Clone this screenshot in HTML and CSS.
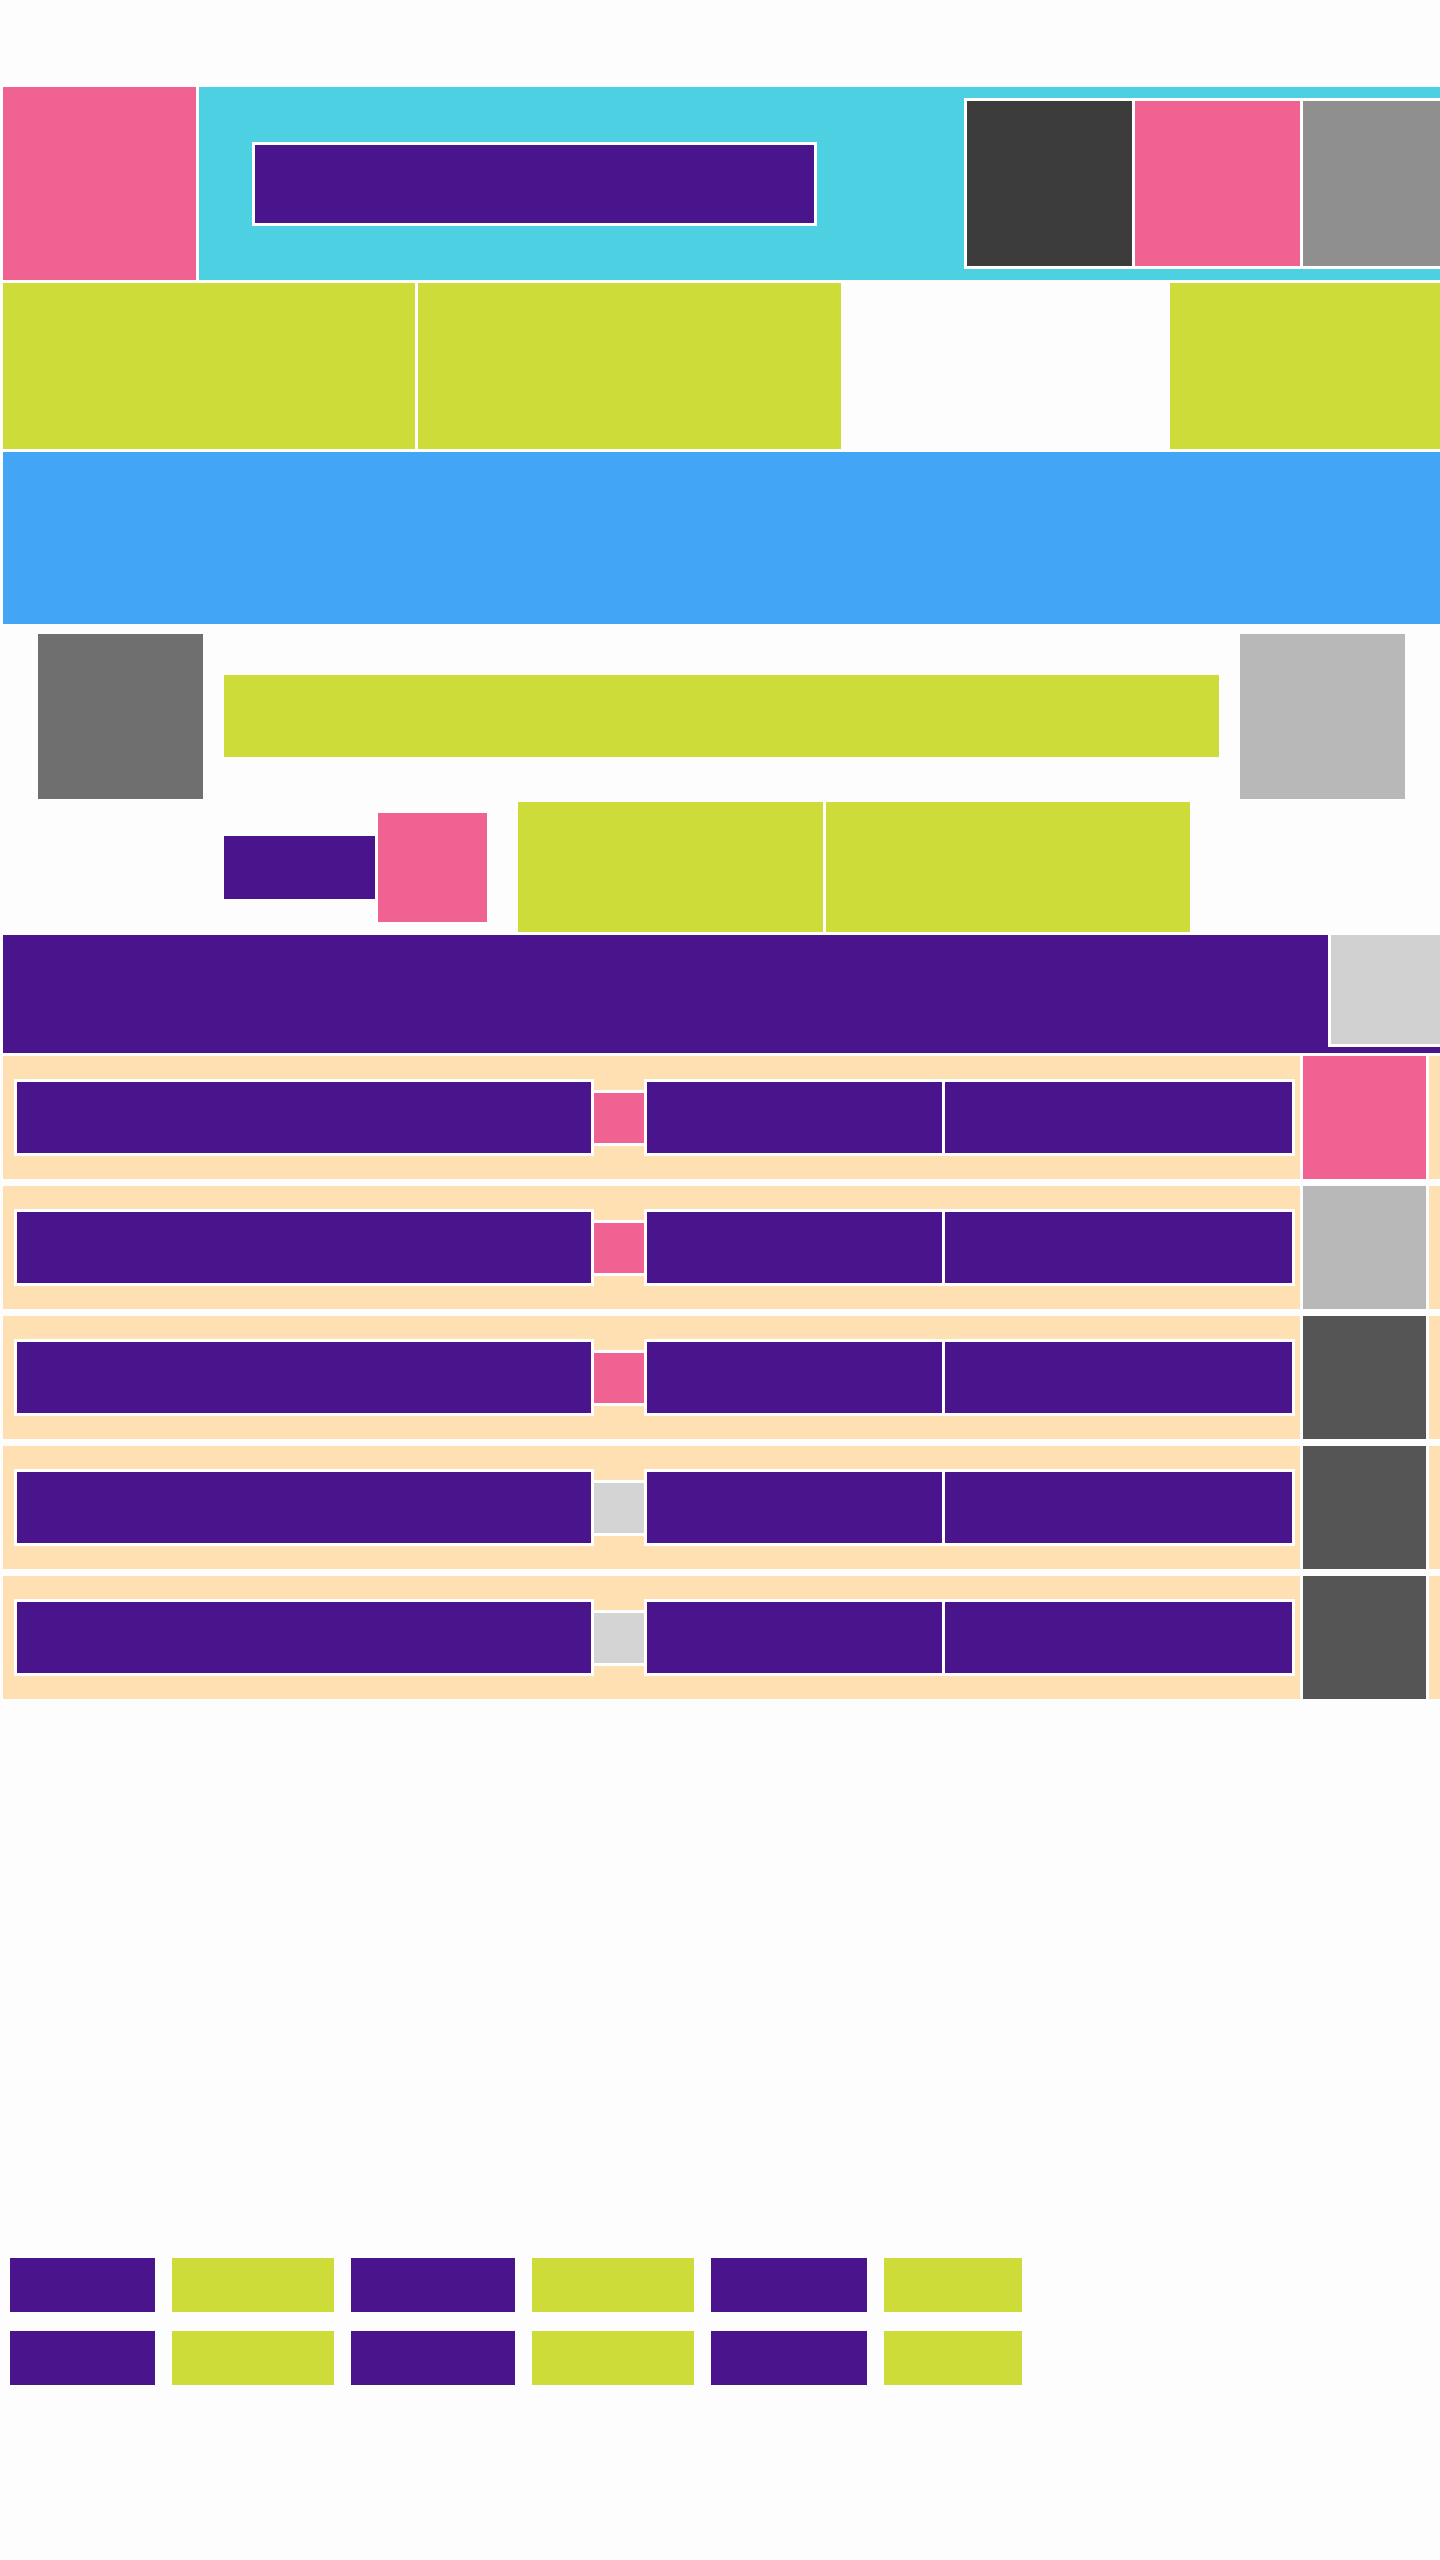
FILE: index.html
```html
<!DOCTYPE html>
<html lang="en">
<head>
    <meta charset="UTF-8">
    <meta name="viewport" content="width=device-width, initial-scale=1.0">
    <title>Dashboard</title>
    <link rel="stylesheet" href="styles.css">
</head>
<body>
    <div class="page">
        <header class="topbar">
            <div class="logo"></div>
            <div class="nav">
                <div class="search"></div>
                <div class="tools">
                    <div class="tool tool-dark"></div>
                    <div class="tool tool-pink"></div>
                    <div class="tool tool-gray"></div>
                </div>
            </div>
        </header>

        <div class="tabs">
            <div class="tab tab-a"></div>
            <div class="tab tab-b"></div>
            <div class="tab tab-c"></div>
        </div>

        <div class="banner"></div>

        <section class="profile">
            <div class="avatar"></div>
            <div class="profile-main">
                <div class="profile-title"></div>
                <div class="profile-actions">
                    <div class="action-label"></div>
                    <div class="action-icon"></div>
                    <div class="action-btn action-btn-a"></div>
                    <div class="action-btn action-btn-b"></div>
                </div>
            </div>
            <div class="side-card"></div>
        </section>

        <div class="list-head">
            <div class="list-head-box"></div>
        </div>

        <div class="list">
            <div class="row">
                <div class="row-body">
                    <div class="cell-name"></div>
                    <div class="dot dot-on"></div>
                    <div class="cell-group">
                        <div class="cell cell-a"></div>
                        <div class="cell cell-b"></div>
                    </div>
                </div>
                <div class="status status-pink"></div>
                <div class="row-tail"></div>
            </div>
            <div class="row">
                <div class="row-body">
                    <div class="cell-name"></div>
                    <div class="dot dot-on"></div>
                    <div class="cell-group">
                        <div class="cell cell-a"></div>
                        <div class="cell cell-b"></div>
                    </div>
                </div>
                <div class="status status-light"></div>
                <div class="row-tail"></div>
            </div>
            <div class="row">
                <div class="row-body">
                    <div class="cell-name"></div>
                    <div class="dot dot-on"></div>
                    <div class="cell-group">
                        <div class="cell cell-a"></div>
                        <div class="cell cell-b"></div>
                    </div>
                </div>
                <div class="status status-dark"></div>
                <div class="row-tail"></div>
            </div>
            <div class="row">
                <div class="row-body">
                    <div class="cell-name"></div>
                    <div class="dot dot-off"></div>
                    <div class="cell-group">
                        <div class="cell cell-a"></div>
                        <div class="cell cell-b"></div>
                    </div>
                </div>
                <div class="status status-dark"></div>
                <div class="row-tail"></div>
            </div>
            <div class="row">
                <div class="row-body">
                    <div class="cell-name"></div>
                    <div class="dot dot-off"></div>
                    <div class="cell-group">
                        <div class="cell cell-a"></div>
                        <div class="cell cell-b"></div>
                    </div>
                </div>
                <div class="status status-dark"></div>
                <div class="row-tail"></div>
            </div>
        </div>

        <footer class="footer">
            <div class="chips">
                <div class="chip chip-1 purple"></div>
                <div class="chip chip-2 lime"></div>
                <div class="chip chip-3 purple"></div>
                <div class="chip chip-4 lime"></div>
                <div class="chip chip-5 purple"></div>
                <div class="chip chip-6 lime"></div>
            </div>
            <div class="chips">
                <div class="chip chip-1 purple"></div>
                <div class="chip chip-2 lime"></div>
                <div class="chip chip-3 purple"></div>
                <div class="chip chip-4 lime"></div>
                <div class="chip chip-5 purple"></div>
                <div class="chip chip-6 lime"></div>
            </div>
        </footer>
    </div>
</body>
</html>
```

FILE: styles.css
```css
body {
    margin: 0;
    background: #fdfdfd;
    font-family: 'Liberation Sans', Arial, sans-serif;
    overflow-x: hidden;
}

.page {
    padding: 87px 0 0 3px;
    height: 2473px;
}

/* top bar */
.topbar {
    display: flex;
    gap: 3px;
    height: 193px;
}

.logo {
    width: 193px;
    background-color: #f06292;
}

.nav {
    flex: 1;
    display: flex;
    align-items: center;
    gap: 147px;
    padding-left: 53px;
    background-color: #4dd0e1;
    overflow: hidden;
}

.search {
    flex: none;
    width: 559px;
    height: 78px;
    border: 3px solid #fff;
    background-color: #4a148c;
}

.tools {
    flex: none;
    display: flex;
    gap: 3px;
    padding: 3px;
    background-color: #fff;
}

.tool {
    width: 165px;
    height: 165px;
}

.tool-dark { background-color: #3c3c3c; }
.tool-pink { background-color: #f06292; }
.tool-gray { background-color: #8f8f8f; }

/* tabs */
.tabs {
    display: flex;
    gap: 3px;
    height: 166px;
    margin-top: 3px;
}

.tab { background-color: #cddc39; }
.tab-a { width: 412px; }
.tab-b { width: 423px; }
.tab-c { flex: 1; margin-left: 326px; }

.banner {
    height: 172px;
    margin-top: 3px;
    background-color: #42a5f5;
}

/* profile */
.profile {
    display: flex;
    align-items: flex-start;
    padding: 10px 0 0 35px;
}

.avatar {
    flex: none;
    width: 165px;
    height: 165px;
    background-color: #6f6f6f;
}

.profile-main {
    width: 995px;
    margin-left: 21px;
}

.profile-title {
    height: 82px;
    margin-top: 41px;
    background-color: #cddc39;
}

.profile-actions {
    display: flex;
    align-items: center;
    height: 130px;
    margin-top: 45px;
}

.action-label {
    width: 151px;
    height: 63px;
    background-color: #4a148c;
}

.action-icon {
    width: 109px;
    height: 109px;
    margin-left: 3px;
    background-color: #f06292;
}

.action-btn {
    height: 130px;
    background-color: #cddc39;
}

.action-btn-a { width: 305px; margin-left: 31px; }
.action-btn-b { width: 364px; margin-left: 3px; }

.side-card {
    flex: none;
    width: 165px;
    height: 165px;
    margin-left: 21px;
    background-color: #b8b8b8;
}

/* list */
.list-head {
    display: flex;
    justify-content: flex-end;
    align-items: flex-start;
    height: 118px;
    margin-top: 3px;
    background-color: #4a148c;
}

.list-head-box {
    width: 109px;
    height: 109px;
    border-left: 3px solid #fff;
    border-bottom: 3px solid #fff;
    background-color: #d1d1d1;
}

.list {
    display: flex;
    flex-direction: column;
    gap: 7px;
    margin-top: 3px;
}

.row {
    display: flex;
    gap: 3px;
    height: 123px;
}

.row-body {
    width: 1286px;
    display: flex;
    align-items: center;
    padding-left: 11px;
    background-color: #ffe0b2;
}

.cell-name {
    width: 574px;
    height: 71px;
    border: 3px solid #fff;
    background-color: #4a148c;
}

.dot {
    width: 50px;
    height: 50px;
    border-top: 3px solid #fff;
    border-bottom: 3px solid #fff;
}

.dot-on { background-color: #f06292; }
.dot-off { background-color: #d4d4d4; }

.cell-group {
    display: flex;
    gap: 3px;
    padding: 3px;
    background-color: #fff;
}

.cell {
    height: 71px;
    background-color: #4a148c;
}

.cell-a { width: 295px; }
.cell-b { width: 347px; }

.status { width: 123px; }
.status-pink { background-color: #f06292; }
.status-light { background-color: #b8b8b8; }
.status-dark { background-color: #555555; }

.row-tail {
    flex: 1;
    background-color: #ffe0b2;
}

/* footer chips */
.footer {
    display: flex;
    flex-direction: column;
    gap: 19px;
    margin-top: 559px;
    padding-left: 7px;
}

.chips {
    display: flex;
    gap: 17px;
}

.chip { height: 54px; }
.chip-1 { width: 145px; }
.chip-2 { width: 162px; }
.chip-3 { width: 164px; }
.chip-4 { width: 162px; }
.chip-5 { width: 156px; }
.chip-6 { width: 138px; }

.purple { background-color: #4a148c; }
.lime { background-color: #cddc39; }
```
